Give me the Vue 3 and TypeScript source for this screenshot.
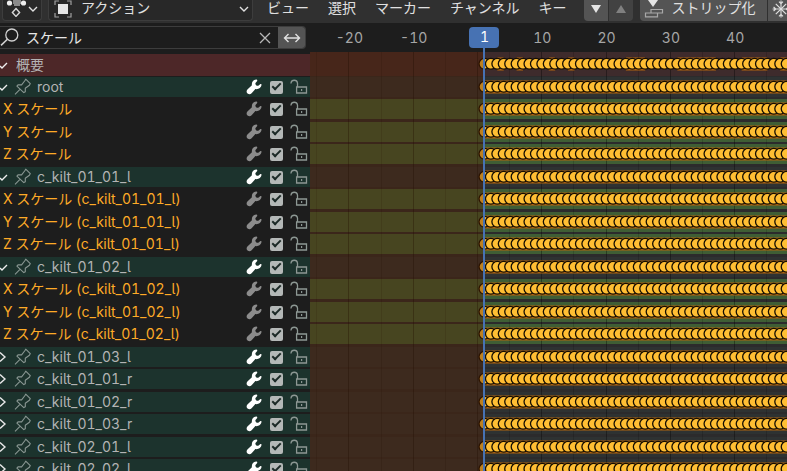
<script setup lang="ts">
import { computed, onBeforeUnmount, onMounted, ref } from 'vue'

type Kind = 'summary' | 'group' | 'curve'
interface Channel {
  name: string
  kind: Kind
  open?: boolean
  enabled: boolean
}

const group = (name: string, open = false): Channel => ({ name, kind: 'group', open, enabled: true })
const curves = (suffix = ''): Channel[] =>
  ['X', 'Y', 'Z'].map((axis) => ({ name: `${axis} スケール${suffix}`, kind: 'curve', enabled: true }))

const channels = ref<Channel[]>([
  { name: '概要', kind: 'summary', open: true, enabled: true },
  group('root', true),
  ...curves(),
  group('c_kilt_01_01_l', true),
  ...curves(' (c_kilt_01_01_l)'),
  group('c_kilt_01_02_l', true),
  ...curves(' (c_kilt_01_02_l)'),
  group('c_kilt_01_03_l'),
  group('c_kilt_01_01_r'),
  group('c_kilt_01_02_r'),
  group('c_kilt_01_03_r'),
  group('c_kilt_02_01_l'),
  group('c_kilt_02_02_l'),
])

const search = ref('スケール')
const menus = ['ビュー', '選択', 'マーカー', 'チャンネル', 'キー']

// Frame number to horizontal position inside the timeline.
const frameX = (frame: number): number => 168 + frame * 6.43
const range = (from: number, to: number, step = 1): number[] => {
  const out: number[] = []
  for (let f = from; f <= to; f += step) out.push(f)
  return out
}

const timeline = ref<HTMLElement | null>(null)
const width = ref(window.innerWidth - 310)
const measure = () => {
  if (timeline.value) width.value = timeline.value.clientWidth
}
onMounted(() => {
  measure()
  window.addEventListener('resize', measure)
})
onBeforeUnmount(() => window.removeEventListener('resize', measure))

const lastFrame = computed(() => Math.ceil((width.value - frameX(0)) / 6.43) + 1)
const keys = computed(() => range(1, lastFrame.value))
const gridLines = computed(() => range(-25, lastFrame.value, 5))
const labels = computed(() => range(-20, lastFrame.value, 10).filter((f) => f !== 0 && frameX(f) + 12 < width.value))
const holds = [[3, 4], [6, 7], [11, 12], [14, 15], [23, 26], [31, 37], [41, 45], [47, 60]]
</script>

<template>
  <div class="editor">
    <svg class="defs" aria-hidden="true">
      <symbol id="key-row" overflow="visible">
        <circle v-for="f in keys" :key="f" :cx="frameX(f)" cy="9.8" r="5.4" fill="#ffbe33" stroke="#140d02" stroke-width="1.3" />
      </symbol>
      <symbol id="pin" viewBox="0 0 18 18">
        <path d="M11.7 1.2 16.3 5.6 15.4 7.2 11.3 10.2V13.8L9.8 14.6 2.9 8.2 4 6.9H7.6L10.6 3Z M6.2 11.2 1 16.4" fill="none" stroke="currentColor" stroke-width="1.1" stroke-linejoin="round" />
      </symbol>
      <symbol id="wrench" viewBox="0 0 16 16">
        <path d="M10.2.5C7.2.9 5.4 3.2 5.9 6.2L1.4 10.6C.1 12 .5 14 1.9 14.8 3.2 15.5 4.7 15.2 5.6 14.2L9.4 10.1C12.6 10.6 15.2 8.6 15.6 5.8 15.7 4.9 14.7 4.6 14.1 5.2L12.3 6.7C10.9 7.3 8.9 5.5 9.5 4.1L11 2.3C11.6 1.4 11.2.4 10.2.5Z" fill="currentColor" />
      </symbol>
      <symbol id="lock" viewBox="0 0 18 16">
        <path d="M1 4.5V4A3.3 3.3 0 0 1 7.5 4V8 M6.6 8H16.5V14H6.6Z" fill="none" stroke="currentColor" stroke-width="1.3" />
        <path d="M11 10H12.2V12H11Z" fill="currentColor" />
      </symbol>
      <symbol id="down" viewBox="0 0 10 8">
        <path d="M1 2 5 6 9 2" fill="none" stroke="currentColor" stroke-width="1.4" />
      </symbol>
    </svg>

    <header class="header">
      <button class="select mode" aria-label="エディタータイプ">
        <svg width="22" height="20" viewBox="0 0 22 20">
          <path d="M7 4H15M11 4V9" stroke="#8a8a8a" stroke-width="6" />
          <circle cx="3.5" cy="6" r="2.6" fill="#eee" />
          <circle cx="17.5" cy="6" r="2.6" fill="#eee" />
          <path d="M10 11.5 13.6 15.5 10 19.4 6.4 15.5Z" fill="#282828" stroke="#d8d8d8" stroke-width="1.4" />
        </svg>
        <svg class="caret" width="10" height="8"><use href="#down" /></svg>
      </button>
      <button class="select action">
        <svg width="18" height="18" viewBox="0 0 18 18">
          <path d="M1 5V1H5M13 1H17V5M17 13V17H13M5 17H1V13" fill="none" stroke="#a0a0a0" stroke-width="1.2" />
          <rect x="4" y="4" width="10" height="10" fill="#e6e6e6" />
        </svg>
        <span>アクション</span>
        <svg class="caret" width="10" height="8"><use href="#down" /></svg>
      </button>
      <nav class="menus">
        <button v-for="m in menus" :key="m">{{ m }}</button>
      </nav>
      <div class="move">
        <button aria-label="下へ">
          <svg width="12" height="10"><path d="M1 1H11L6 9Z" fill="#e6e6e6" /></svg>
        </button>
        <button disabled aria-label="上へ">
          <svg width="12" height="10"><path d="M1 9H11L6 1Z" fill="#808080" /></svg>
        </button>
      </div>
      <div class="strips">
        <button class="push">
          <svg width="20" height="18" viewBox="0 0 20 18">
            <path d="M4 0H14L9 7Z" fill="#e6e6e6" />
            <path d="M7 9.5H18.5V13H7ZM1.5 13H13.5V16.8H1.5Z" fill="none" stroke="#a8a8a8" stroke-width="1.2" />
          </svg>
          <span>ストリップ化</span>
        </button>
        <button class="freeze" aria-label="フリーズ">
          <svg width="18" height="18" viewBox="0 0 18 18">
            <g fill="none" stroke="#e0e0e0" stroke-width="1.1">
              <path v-for="a in [0, 90, 180, 270]" :key="a" d="M9 9V.6M7 1.6 9 3.8 11 1.6" :transform="`rotate(${a} 9 9)`" />
              <path v-for="a in [45, 135, 225, 315]" :key="a" d="M9 9V1.6" :transform="`rotate(${a} 9 9)`" />
            </g>
          </svg>
        </button>
      </div>
    </header>

    <main class="body">
      <section class="channels">
        <div class="search">
          <label class="field">
            <svg width="19" height="20" viewBox="0 0 19 20">
              <circle cx="11.8" cy="8" r="6" fill="none" stroke="#d0d0d0" stroke-width="1.3" />
              <path d="M7.4 12.2 1 18.4" stroke="#d0d0d0" stroke-width="1.6" />
            </svg>
            <input v-model="search" type="text" aria-label="検索" />
          </label>
          <button class="clear" aria-label="クリア" @click="search = ''">
            <svg width="12" height="12"><path d="M1 1 11 11M11 1 1 11" stroke="#b8b8b8" stroke-width="1.3" /></svg>
          </button>
          <button class="invert" aria-label="反転">
            <svg width="18" height="12" viewBox="0 0 18 12">
              <path d="M1.5 6H16.5M5.5 2 1.5 6 5.5 10M12.5 2 16.5 6 12.5 10" fill="none" stroke="#e0e0e0" stroke-width="1.4" />
            </svg>
          </button>
        </div>
        <ul class="rows">
          <li v-for="c in channels" :key="c.name" class="row" :class="c.kind">
            <div class="channel">
              <button v-if="c.kind !== 'curve'" class="fold" aria-label="展開" @click="c.open = !c.open">
                <svg v-if="c.open" width="12" height="14"><path d="M0 8 2 10 7 5" fill="none" stroke="#f0f0f0" stroke-width="1.4" /></svg>
                <svg v-else width="12" height="14"><path d="M0 2.5 5 7 0 11.5" fill="none" stroke="#e8e8e8" stroke-width="1.4" /></svg>
              </button>
              <svg v-if="c.kind === 'group'" class="pin" width="18" height="18"><use href="#pin" /></svg>
              <span class="name">{{ c.name }}</span>
              <template v-if="c.kind !== 'summary'">
                <button class="wrench" aria-label="モディファイアー"><svg width="16" height="16"><use href="#wrench" /></svg></button>
                <input v-model="c.enabled" type="checkbox" :aria-label="c.name" />
                <button class="lock" aria-label="ロック"><svg width="18" height="16"><use href="#lock" /></svg></button>
              </template>
            </div>
          </li>
        </ul>
      </section>

      <section ref="timeline" class="timeline">
        <div class="ruler">
          <span v-for="f in labels" :key="f" class="tick" :style="{ left: frameX(f) + 'px' }">{{ f }}</span>
        </div>
        <div class="tracks">
          <div v-for="c in channels" :key="c.name" class="row" :class="c.kind">
            <div class="track">
              <svg class="keys" width="100%" height="20">
                <template v-if="c.kind === 'summary'">
                  <rect v-for="h in holds" :key="h[0]" :x="frameX(h[0])" y="3.5" :width="frameX(h[1]) - frameX(h[0])" height="13" fill="#b0640f" />
                </template>
                <rect v-else :x="frameX(1)" y="3.5" width="100%" height="13" fill="#b0640f" />
                <use href="#key-row" />
              </svg>
            </div>
          </div>
          <svg class="grid" width="100%" height="100%">
            <line v-for="f in gridLines" :key="f" :x1="Math.round(frameX(f)) - 0.5" :x2="Math.round(frameX(f)) - 0.5" y1="0" y2="100%" stroke="#000" :stroke-opacity="f % 10 ? 0.14 : 0.34" />
          </svg>
          <div class="outside" :style="{ width: frameX(1) + 'px' }"></div>
        </div>
        <div class="playhead" :style="{ left: frameX(1) + 'px' }"><span>1</span></div>
      </section>
    </main>
  </div>
</template>

<style>
body {
  background: #1d1d1d;
  overflow: hidden;
}
</style>

<style scoped>
.editor {
  display: flex;
  flex-direction: column;
  height: 100vh;
  overflow: hidden;
  background: #1d1d1d;
  color: #e0e0e0;
  font: 14px/20px Inter, "Noto Sans CJK JP", sans-serif;
  font-feature-settings: "cv05", "tnum";
}
.defs {
  position: absolute;
  width: 0;
  height: 0;
}
svg {
  display: block;
  flex: none;
}
button {
  display: flex;
  align-items: center;
  padding: 0;
  border: 0;
  background: none;
  color: inherit;
  font: inherit;
  font-feature-settings: inherit;
  white-space: nowrap;
}
.header {
  display: flex;
  flex: none;
  height: 23px;
  padding-left: 2px;
  padding-bottom: 2px;
  box-sizing: border-box;
  background: #303030;
}
.header button {
  align-items: flex-start;
  flex: none;
  line-height: 16px;
}
.header .select {
  background: #282828;
  border: 1px solid #3d3d3d;
  border-top: 0;
  border-radius: 0 0 4px 4px;
}
.caret {
  margin: 5px 3px 0 auto;
}
.mode {
  width: 40px;
  padding-left: 3px;
  overflow: hidden;
}
.mode svg:first-child {
  margin-top: -3px;
}
.header .mode .caret {
  margin-left: 0;
}
.action {
  width: 205px;
  margin: 0 4px 0 6px;
  padding-left: 5px;
  gap: 9px;
}
.menus {
  display: flex;
  flex: none;
}
.menus button {
  padding: 0 9px 0 10px;
}
.move,
.strips {
  display: flex;
  flex: none;
  gap: 1px;
  border-radius: 0 0 4px 4px;
  overflow: hidden;
}
.move {
  margin: 0 7px 0 8px;
}
.move button {
  width: 24px;
  justify-content: center;
  padding-top: 4px;
  background: #545454;
}
.move button:disabled {
  background: #424242;
}
.strips button {
  background: #545454;
}
.push {
  padding: 0 11px 0 4px;
  gap: 8px;
}
.freeze {
  padding: 0 4px;
}
.body {
  display: flex;
  flex: 1;
  min-height: 0;
}
.channels {
  flex: none;
  width: 310px;
  overflow: hidden;
}
.search {
  display: flex;
  height: 23px;
  margin: 3px 4px 5px 0;
  box-sizing: border-box;
  border: 1px solid #3d3d3d;
  border-left: 0;
  border-radius: 0 4px 4px 0;
  overflow: hidden;
}
.field {
  display: flex;
  flex: 1;
  min-width: 0;
  gap: 7px;
}
.field input {
  flex: 1;
  min-width: 0;
  padding: 0;
  border: 0;
  outline: 0;
  background: none;
  color: #e6e6e6;
  font: inherit;
}
.clear {
  width: 19px;
}
.invert {
  width: 27px;
  justify-content: center;
  background: #545454;
}
.rows {
  margin: 0;
  padding: 0;
  list-style: none;
}
.row {
  height: 22px;
}
.row:nth-child(odd) {
  height: 23px;
}
.channel {
  display: flex;
  align-items: center;
  height: 20px;
  padding-right: 2px;
  color: #b4b4b4;
}
.summary .channel {
  height: 22px;
  background: #4d2728;
}
.group .channel {
  background: #1c332d;
}
.curve .channel {
  padding-left: 3px;
  color: #ffab27;
}
.fold {
  width: 14px;
}
.summary .fold {
  width: 16px;
}
.pin {
  margin-right: 5px;
  color: #8a9793;
}
.name {
  flex: 1;
  white-space: nowrap;
}
.wrench {
  color: #fff;
}
.curve .wrench {
  color: #8c8c8c;
}
.channel input {
  appearance: none;
  width: 13px;
  height: 13px;
  margin: 0 7px 0 8px;
  border-radius: 2px;
  background: #b4b8b7;
  position: relative;
}
.channel input:checked::after {
  content: "";
  position: absolute;
  left: 2px;
  top: 2px;
  width: 7px;
  height: 3px;
  border: solid #1c2a27;
  border-width: 0 0 2px 2px;
  box-sizing: content-box;
  transform: rotate(-45deg);
}
.lock {
  color: #8d9894;
}
.timeline {
  display: flex;
  flex-direction: column;
  flex: 1;
  min-width: 0;
  position: relative;
  overflow: hidden;
}
.ruler {
  position: relative;
  flex: none;
  height: 29px;
  color: #a6a6a6;
}
.tick {
  position: absolute;
  top: 5px;
  transform: translateX(-50%);
}
.tracks {
  position: relative;
  flex: 1;
  min-height: 0;
  padding-top: 2px;
  background: #2c2b2c;
}
.track {
  height: 20px;
}
.summary .track {
  height: 22px;
  background: #3e2b2c;
  box-shadow: 0 -2px #3e2b2c;
}
.group .track {
  background: #2e3232;
}
.curve .track {
  background: #3f5e35;
}
.keys {
  position: relative;
  z-index: 2;
}
.grid {
  position: absolute;
  inset: 0;
  z-index: 1;
}
.outside {
  position: absolute;
  top: 0;
  bottom: 0;
  left: 0;
  z-index: 3;
  background: rgba(84, 32, 0, 0.39);
}
.playhead {
  position: absolute;
  top: 4px;
  bottom: 0;
  z-index: 4;
  width: 2px;
  transform: translateX(-50%);
  background: #4772b3;
}
.playhead span {
  position: absolute;
  left: -14px;
  width: 30px;
  height: 21px;
  border-radius: 4px;
  background: #4772b3;
  color: #fff;
  text-align: center;
}
</style>
